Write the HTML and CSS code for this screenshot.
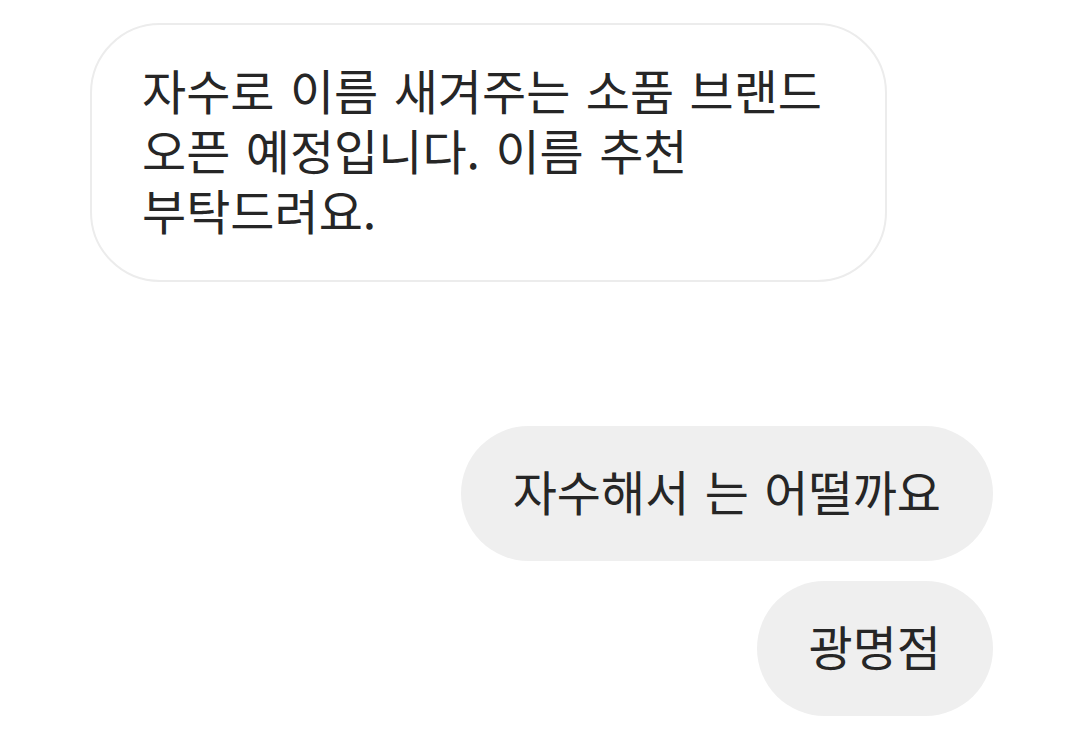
FILE: index.html
```html
<!DOCTYPE html>
<html lang="ko">
<head>
  <meta charset="UTF-8">
  <meta name="viewport" content="width=device-width, initial-scale=1.0">
  <title>메시지</title>
  <link rel="stylesheet" href="styles.css">
</head>
<body>
<div id="chat">
  <div class="bubble received">
    자수로 이름 새겨주는 소품 브랜드<br>
    오픈 예정입니다. 이름 추천<br>
    부탁드려요.
  </div>

  <div class="sent-group">
    <div class="bubble sent">자수해서 는 어떨까요</div>
    <div class="bubble sent">광명점</div>
  </div>
</div>
</body>
</html>
```

FILE: styles.css
```css
body {
  margin: 0;
  background-color: #ffffff;
  font-family: 'Noto Sans CJK KR', 'Noto Sans', sans-serif;
  color: #262626;
}

#chat {
  display: flex;
  flex-direction: column;
  padding: 23px 86px 0 90px;
}

.bubble {
  font-size: 48px;
  line-height: 60px;
  word-spacing: 2px;
  border-radius: 70px;
  box-sizing: border-box;
}

.received {
  align-self: flex-start;
  width: 797px;
  padding: 34px 50px 41px 50px;
  border: 2px solid #ececec; /* faint outline */
  background-color: #ffffff;
}

.sent-group {
  display: flex;
  flex-direction: column;
  align-items: flex-end;
  gap: 20px;
  margin-top: 144px;
}

.sent {
  background-color: #efefef;
  padding: 34px 52px 41px 52px;
  white-space: nowrap;
}
```
